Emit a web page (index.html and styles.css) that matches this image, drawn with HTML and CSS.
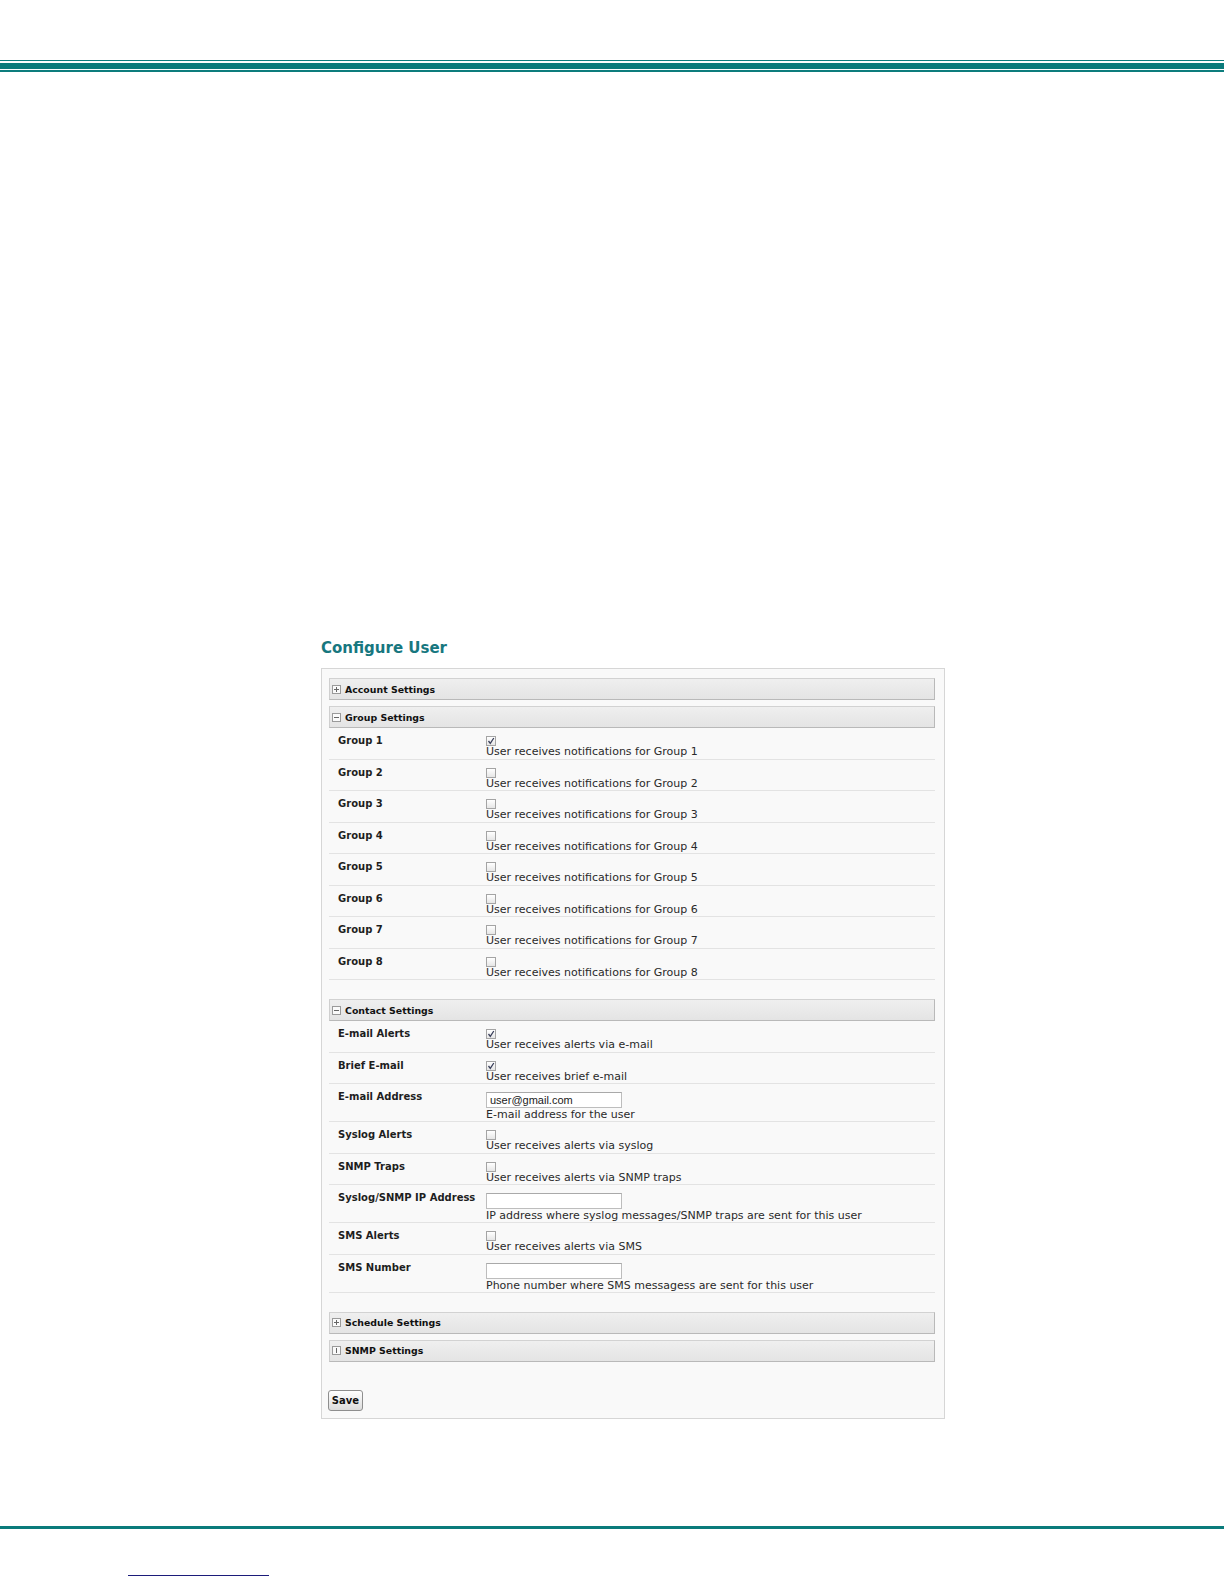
FILE: index.html
```html
<!DOCTYPE html>
<html>
<head>
<meta http-equiv="Content-Type" content="text/html; charset=utf-8"/>
<title>Configure User</title>
<link rel="stylesheet" href="styles.css">
</head>

<body>
<div class="rule-top">
  <div class="rule-thin"></div>
  <div class="rule-thick"></div>
  <div class="rule-last"></div>
</div>

<div class="shot">
<h2 class="page-title">Configure User</h2>

<form class="panel">

  <div class="section">
    <div class="bar">
      <svg class="toggle" width="9" height="9" viewBox="0 0 9 9"><rect x="0.5" y="0.5" width="8" height="8" fill="#fafafa" stroke="#9a9a9a"/><path d="M2 4.5h5M4.5 2v5" stroke="#666"/></svg>
      <span>Account Settings</span>
    </div>
  </div>

  <div class="section section-open">
    <div class="bar">
      <svg class="toggle" width="9" height="9" viewBox="0 0 9 9"><rect x="0.5" y="0.5" width="8" height="8" fill="#fafafa" stroke="#9a9a9a"/><path d="M2 4.5h5" stroke="#666"/></svg>
      <span>Group Settings</span>
    </div>
    <div class="row">
      <div class="label">Group 1</div>
      <div class="field"><span class="check is-on"><svg width="8" height="8" viewBox="0 0 8 8"><path d="M1.5 4l1.8 2.3L6.8 1" fill="none" stroke="#3a3f5a" stroke-width="1.3"/></svg></span><div class="hint">User receives notifications for Group 1</div></div>
    </div>
    <div class="row">
      <div class="label">Group 2</div>
      <div class="field"><span class="check"></span><div class="hint">User receives notifications for Group 2</div></div>
    </div>
    <div class="row">
      <div class="label">Group 3</div>
      <div class="field"><span class="check"></span><div class="hint">User receives notifications for Group 3</div></div>
    </div>
    <div class="row">
      <div class="label">Group 4</div>
      <div class="field"><span class="check"></span><div class="hint">User receives notifications for Group 4</div></div>
    </div>
    <div class="row">
      <div class="label">Group 5</div>
      <div class="field"><span class="check"></span><div class="hint">User receives notifications for Group 5</div></div>
    </div>
    <div class="row">
      <div class="label">Group 6</div>
      <div class="field"><span class="check"></span><div class="hint">User receives notifications for Group 6</div></div>
    </div>
    <div class="row">
      <div class="label">Group 7</div>
      <div class="field"><span class="check"></span><div class="hint">User receives notifications for Group 7</div></div>
    </div>
    <div class="row">
      <div class="label">Group 8</div>
      <div class="field"><span class="check"></span><div class="hint">User receives notifications for Group 8</div></div>
    </div>
  </div>

  <div class="section section-open">
    <div class="bar">
      <svg class="toggle" width="9" height="9" viewBox="0 0 9 9"><rect x="0.5" y="0.5" width="8" height="8" fill="#fafafa" stroke="#9a9a9a"/><path d="M2 4.5h5" stroke="#666"/></svg>
      <span>Contact Settings</span>
    </div>
    <div class="row">
      <div class="label">E-mail Alerts</div>
      <div class="field"><span class="check is-on"><svg width="8" height="8" viewBox="0 0 8 8"><path d="M1.5 4l1.8 2.3L6.8 1" fill="none" stroke="#3a3f5a" stroke-width="1.3"/></svg></span><div class="hint">User receives alerts via e-mail</div></div>
    </div>
    <div class="row">
      <div class="label">Brief E-mail</div>
      <div class="field"><span class="check is-on"><svg width="8" height="8" viewBox="0 0 8 8"><path d="M1.5 4l1.8 2.3L6.8 1" fill="none" stroke="#3a3f5a" stroke-width="1.3"/></svg></span><div class="hint">User receives brief e-mail</div></div>
    </div>
    <div class="row row-input">
      <div class="label">E-mail Address</div>
      <div class="field"><input class="text" type="text" value="user@gmail.com"><div class="hint">E-mail address for the user</div></div>
    </div>
    <div class="row">
      <div class="label">Syslog Alerts</div>
      <div class="field"><span class="check"></span><div class="hint">User receives alerts via syslog</div></div>
    </div>
    <div class="row">
      <div class="label">SNMP Traps</div>
      <div class="field"><span class="check"></span><div class="hint">User receives alerts via SNMP traps</div></div>
    </div>
    <div class="row row-input">
      <div class="label">Syslog/SNMP IP Address</div>
      <div class="field"><input class="text" type="text" value=""><div class="hint">IP address where syslog messages/SNMP traps are sent for this user</div></div>
    </div>
    <div class="row">
      <div class="label">SMS Alerts</div>
      <div class="field"><span class="check"></span><div class="hint">User receives alerts via SMS</div></div>
    </div>
    <div class="row row-input">
      <div class="label">SMS Number</div>
      <div class="field"><input class="text" type="text" value=""><div class="hint">Phone number where SMS messagess are sent for this user</div></div>
    </div>
  </div>

  <div class="section">
    <div class="bar">
      <svg class="toggle" width="9" height="9" viewBox="0 0 9 9"><rect x="0.5" y="0.5" width="8" height="8" fill="#fafafa" stroke="#9a9a9a"/><path d="M2 4.5h5M4.5 2v5" stroke="#666"/></svg>
      <span>Schedule Settings</span>
    </div>
  </div>

  <div class="section">
    <div class="bar">
      <svg class="toggle" width="9" height="9" viewBox="0 0 9 9"><rect x="0.5" y="0.5" width="8" height="8" fill="#fafafa" stroke="#9a9a9a"/><path d="M4.5 2v5" stroke="#666"/></svg>
      <span>SNMP Settings</span>
    </div>
  </div>

  <button class="btn" type="button">Save</button>
</form>
</div>

<div class="rule-bottom"></div>
<div class="foot-link"></div>

</body>
</html>
```

FILE: styles.css
```css
body {
  margin: 0;
  background-color: white;
  font-family: "DejaVu Sans", Verdana, sans-serif;
  font-size: 10px;
  color: #222;
}

/* page rules */
.rule-top {
  padding-top: 60px;
}
.rule-thin {
  height: 1px;
  background: #0d7d7d;
}
.rule-thick {
  height: 6px;
  margin-top: 2px;
  background: #0b7b7b;
}
.rule-last {
  height: 2px;
  margin-top: 1px;
  background: #0d7d7d;
}

.rule-bottom {
  height: 3px;
  margin-top: 107px;
  background: #0b7b7b;
}

.foot-link {
  width: 141px;
  height: 0;
  margin: 46px 0 0 128px;
  border-bottom: 1px solid #1c1c7a;
}

/* screenshot */
.shot {
  width: 624px;
  margin: 566px 0 0 321px;
}

.page-title {
  margin: 0 0 10px;
  font-size: 15px;
  line-height: 20px;
  font-weight: bold;
  color: #17777f;
}

.panel {
  border: 1px solid #d6d6d6;
  background: #f9f9f9;
  padding: 9px 9px 7px 7px;
}

.section {
  margin-bottom: 6px;
}
.section-open {
  margin-bottom: 19px;
}

.bar {
  display: flex;
  align-items: center;
  gap: 4px;
  height: 22px;
  box-sizing: border-box;
  padding-left: 2px;
  border: 1px solid #b9b9b9;
  border-top-color: #d2d2d2;
  border-left-color: #cfcfcf;
  background: linear-gradient(#efefef, #e4e4e4);
  font-size: 9.4px;
  font-weight: bold;
  color: #111;
}

.toggle {
  flex: none;
}

.row {
  display: flex;
  height: 31.5px;
  box-sizing: border-box;
  padding: 6px 0 0 9px;
  border-bottom: 1px solid #e3e3e3;
}
.row-input {
  height: 38px;
}

.label {
  width: 148px;
  flex: none;
  line-height: 13px;
  font-weight: bold;
  color: #1e1e1e;
}

.field {
  display: flex;
  flex-direction: column;
  align-items: flex-start;
}

.check {
  display: flex;
  align-items: center;
  justify-content: center;
  width: 10px;
  height: 10px;
  margin: 2px 0 0;
  border: 1px solid #a4a4a4;
  box-sizing: border-box;
  background: linear-gradient(#ffffff, #e6e6e6);
}

.text {
  width: 136px;
  height: 17px;
  margin: 2px 0 1px;
  padding: 0 3px;
  box-sizing: border-box;
  border: 1px solid #bdbdbd;
  border-top-color: #a9a9a9;
  background: white;
  font-family: "Liberation Sans", Arial, sans-serif;
  font-size: 11px;
  color: #1a1a1a;
  outline: none;
}

.hint {
  font-size: 11px;
  line-height: 12px;
  color: #2a2a2a;
  white-space: nowrap;
}

.btn {
  display: block;
  margin-top: 28px;
  margin-left: -1px;
  width: 35px;
  height: 21px;
  padding: 0;
  border: 1px solid #8e8e8e;
  border-radius: 3px;
  background: linear-gradient(#ffffff, #dcdcdc);
  font-family: "DejaVu Sans", Verdana, sans-serif;
  font-size: 10px;
  font-weight: bold;
  color: #111;
}
```
